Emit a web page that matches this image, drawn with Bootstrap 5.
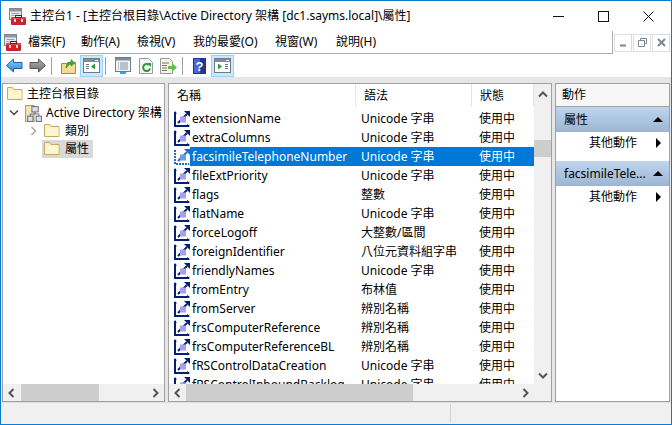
<!DOCTYPE html>
<html lang="zh-Hant">
<head>
<meta charset="UTF-8">
<title>主控台1</title>
<link href="https://cdn.jsdelivr.net/npm/bootstrap@5.3.0/dist/css/bootstrap.min.css" rel="stylesheet">
<style>
    body { margin: 0; background: #fff; font-family: "Noto Sans", "Noto Sans CJK TC", sans-serif; font-size: 12px; color: #000; overflow: hidden; }
    .win { width: 672px; height: 425px; border: 1px solid #0a7bd0; overflow: hidden; }
    .titlebar { height: 30px; padding-left: 8px; }
    .titlebar .ttl { margin-left: 4px; white-space: nowrap; }
    .winbtn { width: 45px; height: 30px; }
    .menubar { height: 23px; }
    .menus { flex: 1; height: 23px; border-bottom: 1px solid #a9adb3; border-right: 1px solid #a9adb3; padding-left: 3px; }
    .menus span { white-space: nowrap; }
    .m1 { margin-left: 7px; width: 53px; } .m2 { width: 56px; } .m3 { width: 56px; } .m4 { width: 82px; } .m5 { width: 61px; }
    .mdi { width: 58px; padding-left: 1px; gap: 1px; }
    .mdibtn { width: 18px; height: 18px; border: 1px solid #dedede; }
    .toolbar { height: 23px; padding-left: 2px; }
    .tb { width: 23px; height: 22px; }
    .tb.on { background: #cce8ff; border: 1px solid #99d1ff; }
    .tsep { width: 1px; height: 18px; background: #a0a0a0; margin: 0 5px 0 2px; }
    .main { height: 325px; background: #e6e6e6; padding: 6px 1px 0 1px; gap: 3px; }
    .pane { background: #fff; border: 1px solid #a0a0a0; }
    .treepane { width: 163px; }
    .treebody { flex: 1; min-height: 0; padding-left: 4px; }
    .tnode { height: 18px; white-space: nowrap; }
    .troot { margin-top: 1px; }
    .tad { margin-top: 1px; }
    .chev { width: 16px; margin-left: 2px; }
    .tsub { padding-left: 23px; }
    .tsub .chev { width: 12px; margin-left: 0; }
    .tlbl { padding: 0 4px 0 2px; height: 18px; }
    .tlbl.tsel { background: #d9d9d9; }
    .tlbl svg { margin-right: 5px; }
    .listpane { width: 384px; }
    .listtop { flex: 1; min-height: 0; }
    .listarea { width: 365px; overflow: hidden; }
    .lhead { height: 25px; }
    .lhead > div { height: 23px; padding-left: 8px; border-right: 1px solid #e5e5e5; }
    .c1 { width: 187px; flex: none; }
    .c2 { width: 116px; flex: none; }
    .c3 { flex: 1; }
    .lrow { height: 19px; white-space: nowrap; padding-left: 5px; }
    .lrow .nm { width: 187px; flex: none; display: flex; align-items: center; }
    .lrow .nmt { padding-left: 2px; height: 19px; line-height: 19px; flex: 1; }
    .lrow .ty { width: 118px; flex: none; }
    .lrow.pick .nmt, .lrow.pick .ty, .lrow.pick .st { background: #0078d7; color: #fff; height: 19px; line-height: 19px; }
    .lrow .st { flex: 1; }
    .vscroll { width: 17px; background: #f0f0f0; }
    .vthumb { height: 17px; background: #cdcdcd; margin-top: 37px; }
    .vfill { flex: 1; }
    .sbtn { height: 17px; }
    .vscroll .sbtn.up { margin-top: 2px; }
    .hscroll { height: 17px; background: #f0f0f0; }
    .hbtn { width: 17px; }
    .hthumb { width: 227px; height: 17px; background: #cdcdcd; }
    .hthumb.short { width: 78px; margin-left: 1px; }
    .actpane { flex: 1; }
    .acthead { height: 23px; padding-left: 6px; border-bottom: 1px solid #a0a0a0; background: #f7f7f7; }
    .actgrp { height: 25px; padding: 0 6px 0 8px; background: linear-gradient(#bfd5ed, #9cb5d2); white-space: nowrap; }
    .actrow { height: 29px; padding: 0 8px 7px 33px; }
    .actrow.low { height: 22px; padding-bottom: 0; }
    .tri-up { width: 0; height: 0; border-left: 5px solid transparent; border-right: 5px solid transparent; border-bottom: 5px solid #000; }
    .tri-r { width: 0; height: 0; border-top: 5px solid transparent; border-bottom: 5px solid transparent; border-left: 5px solid #000; }
    .statusbar { height: 22px; background: #f0f0f0; border-top: 1px solid #e0e0e0; padding-top: 1px; }
    .stleft { width: 450px; height: 19px; border-right: 1px solid #d4d4d4; }
</style>
</head>
<body>
<svg width="0" height="0" class="position-absolute">
    <defs>
        <linearGradient id="g-blue" x1="0" y1="0" x2="0" y2="1"><stop offset="0" stop-color="#8fd0f7"/><stop offset="1" stop-color="#1f8ae0"/></linearGradient>
        <linearGradient id="g-gray" x1="0" y1="0" x2="0" y2="1"><stop offset="0" stop-color="#b0b0b0"/><stop offset="1" stop-color="#6e6e6e"/></linearGradient>
        <symbol id="i-app" viewBox="0 0 17 17">
            <rect x="0.5" y="0.5" width="12" height="11" fill="#e6eaee" stroke="#7d8791"/>
            <rect x="1" y="1" width="11" height="2.500" fill="#8d97a3"/>
            <path d="M2.500 5.500h8M2.500 7.500h3" stroke="#9aa3ad"/>
            <rect x="2" y="9" width="15" height="8" rx="1" fill="#c8242b"/>
            <rect x="2" y="9" width="15" height="2" fill="#e0474d"/>
            <rect x="6.500" y="7.500" width="6" height="2" fill="none" stroke="#7c1317"/>
            <rect x="5" y="11" width="2" height="3" fill="#f4d5d5"/><rect x="12" y="11" width="2" height="3" fill="#f4d5d5"/>
        </symbol>
        <symbol id="i-folder" viewBox="0 0 16 16">
            <path d="M0.500 13.500V1.500h5l1.500 2h8v10z" fill="#fdeeb4" stroke="#c4aa68"/>
            <path d="M1.500 4.500h13v8h-13z" fill="#fef5d2"/>
        </symbol>
        <symbol id="i-attr" viewBox="0 0 16 16">
            <path d="M1 1v14h14" fill="none" stroke="#002070" stroke-width="2"/>
            <path d="M0 2.500L1 0l2 2.500zM13 13l3 2-3 2z" fill="#002070"/>
            <path d="M4 12L13 3" stroke="#002070" stroke-width="2"/>
            <path d="M10 0h6v6z" fill="#002070"/>
            <rect x="6" y="5.500" width="6" height="6" fill="#a6a0f2"/>
        </symbol>
        <symbol id="i-attrw" viewBox="0 0 16 16">
            <rect width="16" height="16" fill="#fff"/>
            <path d="M1 1v14h14" fill="none" stroke="#1a6fc0" stroke-width="2" stroke-dasharray="2 1"/>
            <path d="M4 12L13 3" stroke="#1a6fc0" stroke-width="2"/>
            <path d="M10 0h6v6z" fill="#1a6fc0"/>
            <rect x="6" y="5.500" width="6" height="6" fill="#6aa0e0"/>
        </symbol>
        <symbol id="i-schema" viewBox="0 0 16 16">
            <rect x="0.500" y="0.500" width="8" height="15" fill="#f3e7b8" stroke="#b0a06e"/>
            <rect x="6.500" y="1.500" width="6" height="5" fill="#dfe3e8" stroke="#6a7583"/>
            <rect x="10.500" y="10.500" width="5" height="5" fill="#dfe3e8" stroke="#6a7583"/>
            <rect x="2.500" y="10.500" width="5" height="5" fill="#dfe3e8" stroke="#6a7583"/>
            <path d="M9.500 6.500v2M5 10.500V8.500h8v2" stroke="#6a7583" fill="none"/>
        </symbol>
        <symbol id="i-panel" viewBox="0 0 17 15">
            <rect x="0.500" y="0.500" width="16" height="14" fill="#fff" stroke="#6d7b8a"/>
            <rect x="1" y="1" width="15" height="3" fill="#7f8c9a"/>
            <path d="M12 2.500h3" stroke="#fff"/>
        </symbol>
    </defs>
</svg>
<div class="win d-flex flex-column">
    <div class="titlebar d-flex align-items-center bg-white">
        <svg width="17" height="17"><use href="#i-app"/></svg>
        <span class="ttl flex-grow-1">主控台1 - [主控台根目錄\Active Directory 架構 [dc1.sayms.local]\屬性]</span>
        <div class="winbtn d-flex align-items-center justify-content-center"><svg width="11" height="11"><path d="M0 5.500h11" stroke="#111"/></svg></div>
        <div class="winbtn d-flex align-items-center justify-content-center"><svg width="11" height="11"><rect x="0.500" y="0.500" width="10" height="10" fill="none" stroke="#111"/></svg></div>
        <div class="winbtn d-flex align-items-center justify-content-center"><svg width="11" height="11"><path d="M0.500 0.500l10 10M10.500 0.500l-10 10" stroke="#111"/></svg></div>
    </div>
    <div class="menubar d-flex bg-white">
        <div class="menus d-flex align-items-center">
            <svg width="17" height="17"><use href="#i-app"/></svg>
            <span class="m1">檔案(F)</span><span class="m2">動作(A)</span><span class="m3">檢視(V)</span><span class="m4">我的最愛(O)</span><span class="m5">視窗(W)</span><span>說明(H)</span>
        </div>
        <div class="mdi d-flex align-items-center">
            <div class="mdibtn d-flex align-items-center justify-content-center"><svg width="9" height="9"><path d="M1 7.500h6" stroke="#7b8794" stroke-width="2"/></svg></div>
            <div class="mdibtn d-flex align-items-center justify-content-center"><svg width="9" height="9"><path d="M2.500 2.500v-2h6v5h-2M.5 2.500h6v6h-6z" fill="none" stroke="#7b8794"/></svg></div>
            <div class="mdibtn d-flex align-items-center justify-content-center"><svg width="9" height="9"><path d="M1 1l7 7M8 1l-7 7" stroke="#7b8794" stroke-width="2"/></svg></div>
        </div>
    </div>
    <div class="toolbar d-flex align-items-center bg-white">
        <div class="tb d-flex align-items-center justify-content-center"><svg width="17" height="15"><path d="M.5 7.500L7.500 1v3.500h8.500v6H7.500V14z" fill="url(#g-blue)" stroke="#1b63a8"/></svg></div>
        <div class="tb d-flex align-items-center justify-content-center"><svg width="17" height="15"><path d="M16.500 7.500L9.500 1v3.500H1v6h8.500V14z" fill="url(#g-gray)" stroke="#555"/></svg></div>
        <div class="tsep"></div>
        <div class="tb d-flex align-items-center justify-content-center"><svg width="15" height="16"><path d="M.5 15.500V5.500h5l1-1h8v11z" fill="#f6dc92" stroke="#a98a3c"/><path d="M5 10c0-4 2-6 5-6V1.500L14 5l-4 3V6c-2 0-3 2-5 4z" fill="#3ca83c" stroke="#1f7a1f" stroke-width=".5"/></svg></div>
        <div class="tb on d-flex align-items-center justify-content-center"><svg width="17" height="15"><use href="#i-panel"/><path d="M3 6.500h3M3 8.500h3M3 10.500h3" stroke="#6d7b8a"/><path d="M12 5.500v6l-4-3z" fill="#2a9a3c"/></svg></div>
        <div class="tsep"></div>
        <div class="tb d-flex align-items-center justify-content-center"><svg width="16" height="17"><rect x=".5" y=".5" width="15" height="14" fill="#f4f6f8" stroke="#6d7b8a"/><rect x="1" y="1" width="14" height="2.500" fill="#7f8c9a"/><path d="M5 6h8M5 8h8M5 10h8M5 12h8M3 6h1M3 8h1M3 10h1M3 12h1" stroke="#7f8c9a"/><rect x="5" y="15" width="6" height="2" fill="#39a3ea"/></svg></div>
        <div class="tb d-flex align-items-center justify-content-center"><svg width="14" height="16"><path d="M.5.5h9l4 4v11H.5z" fill="#f6f6f6" stroke="#9a9a9a"/><path d="M10 7a3.500 3.500 0 1 0 1 3.500" fill="none" stroke="#2a9a3c" stroke-width="2"/><path d="M8 5h4v4z" fill="#2a9a3c"/></svg></div>
        <div class="tb d-flex align-items-center justify-content-center"><svg width="17" height="16"><path d="M.5.5h9l3 3v12H.5z" fill="#f8f3df" stroke="#9a9a9a"/><path d="M2 5h7M2 7.500h5M2 10h5M2 12.500h5" stroke="#777"/><path d="M8 8h4V5l5 4.500-5 4.500v-3H8z" fill="#5cbf4c"/></svg></div>
        <div class="tsep"></div>
        <div class="tb d-flex align-items-center justify-content-center"><svg width="13" height="16"><rect width="13" height="16" fill="#24358f"/><rect x="1" y="1" width="6" height="14" fill="#4a67d8"/><text x="6.500" y="13" text-anchor="middle" fill="#fff" font-size="13" font-weight="700" font-family="Liberation Sans, sans-serif">?</text></svg></div>
        <div class="tb on d-flex align-items-center justify-content-center"><svg width="17" height="15"><use href="#i-panel"/><path d="M4 5.500v6l4-3z" fill="#2a9a3c"/><path d="M11 6.500h3M11 8.500h3M11 10.500h3" stroke="#6d7b8a"/></svg></div>
    </div>
    <div class="main d-flex">
        <div class="pane treepane d-flex flex-column">
            <div class="treebody">
                <div class="tnode troot d-flex align-items-center gap-1">
                    <svg width="16" height="16"><use href="#i-folder"/></svg><span>主控台根目錄</span>
                </div>
                <div class="tnode tad d-flex align-items-center">
                    <span class="chev d-flex"><svg width="10" height="8"><path d="M1 1.500l4 4 4-4" fill="none" stroke="#444" stroke-width="1.500"/></svg></span>
                    <svg width="17" height="17"><use href="#i-schema"/></svg><span class="ms-1">Active Directory 架構</span>
                </div>
                <div class="tnode tsub d-flex align-items-center">
                    <span class="chev d-flex"><svg width="8" height="10"><path d="M1.500 1l4 4-4 4" fill="none" stroke="#a6a6a6" stroke-width="1.500"/></svg></span>
                    <div class="tlbl d-flex align-items-center"><svg width="16" height="16"><use href="#i-folder"/></svg><span>類別</span></div>
                </div>
                <div class="tnode tsub d-flex align-items-center">
                    <span class="chev"></span>
                    <div class="tlbl tsel d-flex align-items-center"><svg width="16" height="16"><use href="#i-folder"/></svg><span>屬性</span></div>
                </div>
            </div>
            <div class="hscroll d-flex align-items-center">
                <div class="hbtn d-flex justify-content-center"><svg width="7" height="10"><path d="M5.500 1l-4 4 4 4" fill="none" stroke="#555" stroke-width="2"/></svg></div>
                <div class="hthumb short"></div>
                <div class="flex-grow-1"></div>
                <div class="hbtn d-flex justify-content-center"><svg width="7" height="10"><path d="M1.500 1l4 4-4 4" fill="none" stroke="#555" stroke-width="2"/></svg></div>
            </div>
        </div>
        <div class="pane listpane d-flex flex-column">
            <div class="listtop d-flex overflow-hidden">
                <div class="listarea">
                    <div class="lhead d-flex">
                        <div class="c1 d-flex align-items-center">名稱</div>
                        <div class="c2 d-flex align-items-center">語法</div>
                        <div class="c3 d-flex align-items-center">狀態</div>
                    </div>
                    <div id="rows"></div>
                </div>
                <div class="vscroll d-flex flex-column">
                    <div class="sbtn up d-flex align-items-center justify-content-center"><svg width="10" height="7"><path d="M1 5.500l4-4 4 4" fill="none" stroke="#555" stroke-width="2"/></svg></div>
                    <div class="vthumb"></div>
                    <div class="vfill"></div>
                    <div class="sbtn d-flex align-items-center justify-content-center"><svg width="10" height="7"><path d="M1 1.500l4 4 4-4" fill="none" stroke="#555" stroke-width="2"/></svg></div>
                </div>
            </div>
            <div class="hscroll d-flex align-items-center">
                <div class="hbtn d-flex justify-content-center"><svg width="7" height="10"><path d="M5.500 1l-4 4 4 4" fill="none" stroke="#555" stroke-width="2"/></svg></div>
                <div class="hthumb"></div>
                <div class="flex-grow-1"></div>
                <div class="hbtn d-flex justify-content-center"><svg width="7" height="10"><path d="M1.500 1l4 4-4 4" fill="none" stroke="#555" stroke-width="2"/></svg></div>
                <div class="hbtn"></div>
            </div>
        </div>
        <div class="pane actpane">
            <div class="acthead d-flex align-items-center">動作</div>
            <div class="actgrp d-flex align-items-center justify-content-between"><span>屬性</span><i class="tri-up"></i></div>
            <div class="actrow d-flex align-items-center justify-content-between"><span>其他動作</span><i class="tri-r"></i></div>
            <div class="actgrp d-flex align-items-center justify-content-between"><span>facsimileTele...</span><i class="tri-up"></i></div>
            <div class="actrow low d-flex align-items-center justify-content-between"><span>其他動作</span><i class="tri-r"></i></div>
        </div>
    </div>
    <div class="statusbar d-flex">
        <div class="stleft"></div>
    </div>
</div>
<script src="https://cdn.jsdelivr.net/npm/bootstrap@5.3.0/dist/js/bootstrap.bundle.min.js"></script>
<script>
    const attrs = [
        ['extensionName', 'Unicode 字串'],
        ['extraColumns', 'Unicode 字串'],
        ['facsimileTelephoneNumber', 'Unicode 字串', true],
        ['fileExtPriority', 'Unicode 字串'],
        ['flags', '整數'],
        ['flatName', 'Unicode 字串'],
        ['forceLogoff', '大整數/區間'],
        ['foreignIdentifier', '八位元資料組字串'],
        ['friendlyNames', 'Unicode 字串'],
        ['fromEntry', '布林值'],
        ['fromServer', '辨別名稱'],
        ['frsComputerReference', '辨別名稱'],
        ['frsComputerReferenceBL', '辨別名稱'],
        ['fRSControlDataCreation', 'Unicode 字串'],
        ['fRSControlInboundBacklog', 'Unicode 字串']
    ];
    const box = document.getElementById('rows');
    attrs.forEach(a => {
        const row = document.createElement('div');
        row.className = 'lrow d-flex align-items-center' + (a[2] ? ' pick' : '');
        row.innerHTML = `<div class="nm"><svg width="16" height="16"><use href="#${a[2] ? 'i-attrw' : 'i-attr'}"/></svg><span class="nmt">${a[0]}</span></div><div class="ty">${a[1]}</div><div class="st">使用中</div>`;
        box.appendChild(row);
    });
</script>
</body>
</html>
